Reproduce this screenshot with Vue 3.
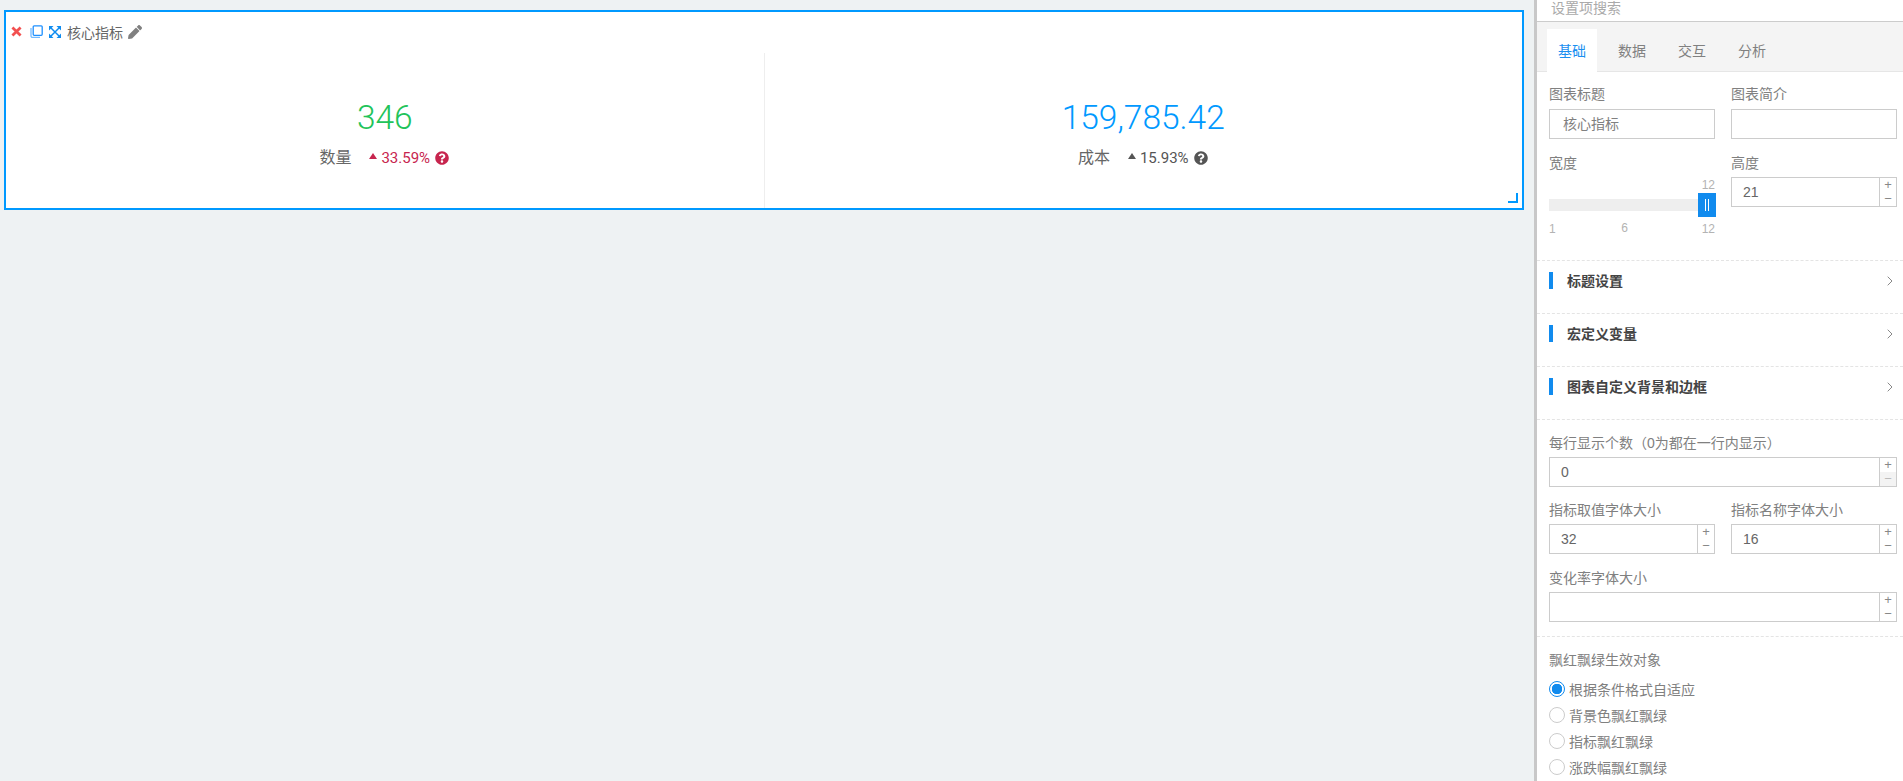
<script setup>
const metrics = [
  { value: '346', name: '数量', rate: '33.59%', valueColor: '#22c35a', rateColor: '#c7254e' },
  { value: '159,785.42', name: '成本', rate: '15.93%', valueColor: '#0099ff', rateColor: '#555555' },
]
const tabs = ['基础', '数据', '交互', '分析']
const sections = ['标题设置', '宏定义变量', '图表自定义背景和边框']
const radios = ['根据条件格式自适应', '背景色飘红飘绿', '指标飘红飘绿', '涨跌幅飘红飘绿']
const helpPath = 'M504 256c0 136.997-111.043 248-248 248S8 392.997 8 256C8 119.083 119.043 8 256 8s248 111.083 248 248zM262.655 90c-54.497 0-89.255 22.957-116.549 63.758-3.536 5.286-2.353 12.415 2.715 16.258l34.699 26.31c5.205 3.947 12.621 3.008 16.665-2.122 17.864-22.658 30.113-35.797 57.303-35.797 20.429 0 45.698 13.148 45.698 32.958 0 14.976-12.363 22.667-32.534 33.976C247.128 238.528 216 254.941 216 296v4c0 6.627 5.373 12 12 12h56c6.627 0 12-5.373 12-12v-1.333c0-28.462 83.186-29.647 83.186-106.667 0-58.002-60.165-102-116.531-102zM256 338c-25.365 0-46 20.635-46 46 0 25.364 20.635 46 46 46s46-20.636 46-46c0-25.365-20.635-46-46-46z'
</script>

<template>
  <div class="page">
    <main class="canvas">
      <section class="card">
        <header class="card-head">
          <svg class="ic-close" viewBox="0 0 10 10"><path d="M1.300 1.300l7.400 7.400M8.700 1.300L1.300 8.700" /></svg>
          <svg class="ic-copy" viewBox="0 0 13 13">
            <path class="back" d="M1 3v8a1.500 1.500 0 0 0 1.500 1.500H10" />
            <rect x="3.200" y="0.800" width="9" height="9.500" rx="1" />
          </svg>
          <svg class="ic-expand" viewBox="0 0 12 12">
            <path class="cross" d="M2 2l8 8M10 2l-8 8" />
            <path class="fill" d="M0 0h4.500L0 4.500zM12 0v4.500L7.500 0zM0 12V7.500L4.500 12zM12 12H7.500L12 7.500z" />
          </svg>
          <span class="card-title">核心指标</span>
          <svg class="ic-pencil" viewBox="0 0 512 512"><path d="M497.900 142.100l-46.100 46.100c-4.700 4.700-12.300 4.700-17 0l-111-111c-4.700-4.700-4.700-12.300 0-17l46.100-46.100c18.700-18.700 49.100-18.700 67.900 0l60.100 60.100c18.800 18.700 18.800 49.100 0 67.900zM284.200 99.800L21.600 362.400.4 483.900c-2.900 16.400 11.400 30.600 27.800 27.800l121.500-21.300 262.600-262.600c4.700-4.700 4.700-12.300 0-17l-111-111c-4.800-4.700-12.400-4.700-17.100 0z" /></svg>
        </header>
        <div class="metrics">
          <div v-for="m in metrics" :key="m.name" class="metric">
            <div class="metric-value" :style="{ color: m.valueColor }">{{ m.value }}</div>
            <div class="metric-foot">
              <span class="metric-name">{{ m.name }}</span>
              <span class="metric-rate" :style="{ color: m.rateColor }">
                <i class="tri"></i>{{ m.rate }}
                <svg class="ic-help" viewBox="0 0 512 512"><path :d="helpPath" fill="currentColor" /></svg>
              </span>
            </div>
          </div>
        </div>
        <i class="resize"></i>
      </section>
    </main>

    <aside class="panel">
      <div class="search">设置项搜索</div>
      <nav class="tabs">
        <span v-for="(t, i) in tabs" :key="t" class="tab" :class="{ active: i === 0 }">{{ t }}</span>
      </nav>

      <div class="block base">
        <div class="row">
          <div class="field">
            <label>图表标题</label>
            <div class="text-input">核心指标</div>
          </div>
          <div class="field">
            <label>图表简介</label>
            <div class="text-input"></div>
          </div>
        </div>
        <div class="row">
          <div class="field">
            <label>宽度</label>
            <div class="slider">
              <div class="slider-now">12</div>
              <div class="slider-track">
                <span class="slider-handle"><i></i><i></i></span>
              </div>
              <div class="slider-scale"><span>1</span><span class="mid">6</span><span>12</span></div>
            </div>
          </div>
          <div class="field">
            <label>高度</label>
            <div class="num-input">
              <span class="num-value">21</span>
              <span class="spin"><b>+</b><b>−</b></span>
            </div>
          </div>
        </div>
      </div>

      <div v-for="s in sections" :key="s" class="fold">
        <i class="fold-bar"></i>
        <span class="fold-title">{{ s }}</span>
        <svg class="chevron" viewBox="0 0 6 10"><path d="M.7.7L5 5 .7 9.300" /></svg>
      </div>

      <div class="block sizes">
        <div class="field">
          <label>每行显示个数（0为都在一行内显示）</label>
          <div class="num-input">
            <span class="num-value">0</span>
            <span class="spin"><b>+</b><b class="off">−</b></span>
          </div>
        </div>
        <div class="row second">
          <div class="field">
            <label>指标取值字体大小</label>
            <div class="num-input">
              <span class="num-value">32</span>
              <span class="spin"><b>+</b><b>−</b></span>
            </div>
          </div>
          <div class="field">
            <label>指标名称字体大小</label>
            <div class="num-input">
              <span class="num-value">16</span>
              <span class="spin"><b>+</b><b>−</b></span>
            </div>
          </div>
        </div>
        <div class="field">
          <label>变化率字体大小</label>
          <div class="num-input">
            <span class="num-value"></span>
            <span class="spin"><b>+</b><b>−</b></span>
          </div>
        </div>
      </div>

      <div class="block target">
        <label>飘红飘绿生效对象</label>
        <div v-for="(r, i) in radios" :key="r" class="radio" :class="{ checked: i === 0 }">
          <i class="radio-dot"></i>{{ r }}
        </div>
      </div>
    </aside>
  </div>
</template>

<style scoped>
.page {
  display: flex;
  height: 781px;
  overflow: hidden;
  background: #eef2f3;
  color: #808080;
  font-family: "Liberation Sans", "Noto Sans CJK SC", sans-serif;
  font-size: 14px;
}
.canvas {
  flex: 1;
  min-width: 0;
  padding: 10px 10px 0 4px;
}
.card {
  position: relative;
  display: flex;
  flex-direction: column;
  height: 200px;
  box-sizing: border-box;
  background: #fff;
  border: 2px solid #0099ff;
}
.card-head {
  display: flex;
  align-items: center;
  height: 41px;
  box-sizing: border-box;
  padding: 0 0 2px 5px;
  color: #666;
}
.ic-close {
  width: 11px;
  height: 11px;
  fill: none;
  stroke: #f25050;
  stroke-width: 2.500;
}
.ic-copy {
  width: 13px;
  height: 13px;
  margin-left: 8px;
  fill: none;
  stroke: #1e90ff;
  stroke-width: 1.300;
}
.ic-copy .back {
  stroke: #74bbff;
}
.ic-expand {
  width: 12px;
  height: 12px;
  margin-left: 6px;
}
.ic-expand .fill {
  fill: #0f8cf0;
}
.ic-expand .cross {
  fill: none;
  stroke: #0f8cf0;
  stroke-width: 1.500;
}
.card-title {
  margin-left: 6px;
  font-size: 14px;
  color: #666;
}
.ic-pencil {
  width: 14px;
  height: 14px;
  margin-left: 5px;
  fill: #808080;
}
.metrics {
  display: flex;
  flex: 1;
}
.metric {
  flex: 1;
  display: flex;
  flex-direction: column;
  align-items: center;
  padding-top: 45px;
}
.metric + .metric {
  border-left: 1px solid #eeeeee;
}
.metric-value {
  font-family: Roboto, "Liberation Sans", sans-serif;
  font-weight: 300;
  font-size: 33.500px;
  line-height: 40px;
}
.metric-foot {
  display: flex;
  align-items: center;
  margin-top: 9px;
  margin-left: -1px;
  line-height: 22px;
}
.metric-name {
  font-size: 16px;
  color: #666;
}
.metric-rate {
  display: flex;
  align-items: center;
  margin-left: 18px;
  font-family: Roboto, "Liberation Sans", sans-serif;
  font-size: 15px;
}
.tri {
  width: 0;
  height: 0;
  margin-right: 4px;
  border-left: 4px solid transparent;
  border-right: 4px solid transparent;
  border-bottom: 6px solid currentColor;
  transform: translateY(-2px);
}
.ic-help {
  width: 14px;
  height: 14px;
  margin-left: 5px;
}
.resize {
  position: absolute;
  right: 4px;
  bottom: 5px;
  width: 8px;
  height: 8px;
  border-right: 2px solid #0099ff;
  border-bottom: 2px solid #0099ff;
}
.panel {
  width: 366px;
  flex: none;
  border-left: 3px solid #c8c8c8;
  background: #fff;
}
.search {
  height: 21px;
  padding-left: 14px;
  border-bottom: 1px solid #cccccc;
  font-size: 14px;
  line-height: 17px;
  color: #aaaaaa;
}
.tabs {
  display: flex;
  gap: 10px;
  height: 50px;
  box-sizing: border-box;
  padding: 7px 0 0 10px;
  background: #f4f4f4;
  border-bottom: 1px solid #e6e6e6;
}
.tab {
  width: 50px;
  height: 43px;
  line-height: 44px;
  text-align: center;
  color: #808080;
}
.tab.active {
  background: #fff;
  color: #1a8ff0;
}
.block {
  padding: 0 6px 0 12px;
}
.base {
  height: 188px;
  box-sizing: border-box;
  padding-top: 12px;
}
.base .row:first-child label {
  margin-bottom: 5px;
}
.row {
  display: grid;
  grid-template-columns: 166px 166px;
  gap: 16px;
}
.row + .row,
.sizes > * + * {
  margin-top: 14px;
}
.sizes > .second {
  margin-top: 13px;
}
label {
  display: block;
  margin-bottom: 4px;
  line-height: 20px;
  color: #808080;
}
.text-input {
  height: 30px;
  box-sizing: border-box;
  padding-left: 13px;
  border: 1px solid #cccccc;
  line-height: 28px;
  color: #808080;
}
.num-input {
  display: flex;
  height: 30px;
  box-sizing: border-box;
  border: 1px solid #cccccc;
}
.num-value {
  flex: 1;
  padding-left: 11px;
  line-height: 28px;
  color: #666;
}
.spin {
  display: flex;
  flex-direction: column;
  width: 16px;
  border-left: 1px solid #cccccc;
}
.spin b {
  flex: 1;
  font-weight: 400;
  font-size: 13px;
  line-height: 14px;
  text-align: center;
  color: #888;
}
.spin b.off {
  background: #f3f3f3;
  color: #bbb;
}
.slider {
  color: #b3b3b3;
  font-size: 12px;
}
.slider-now {
  height: 14px;
  line-height: 16px;
  text-align: right;
}
.slider-track {
  position: relative;
  height: 12px;
  margin-top: 8px;
  background: #eeeeee;
}
.slider-handle {
  position: absolute;
  right: -1px;
  top: -6px;
  display: flex;
  justify-content: center;
  gap: 2px;
  width: 18px;
  height: 24px;
  padding-top: 6px;
  box-sizing: border-box;
  background: #118bee;
}
.slider-handle i {
  width: 1px;
  height: 12px;
  background: #fff;
}
.slider-scale {
  display: flex;
  justify-content: space-between;
  margin-top: 11px;
  line-height: 14px;
}
.slider-scale .mid {
  margin: -1px 8px 0 0;
}
.fold {
  display: flex;
  align-items: center;
  height: 53px;
  box-sizing: border-box;
  padding: 0 10px 13px 12px;
  border-top: 1px dashed #e4e4e4;
}
.fold-bar {
  width: 4px;
  height: 17px;
  background: #118bee;
}
.fold-title {
  flex: 1;
  margin: -2px 0 0 14px;
  font-weight: 700;
  color: #444;
}
.chevron {
  width: 6px;
  height: 10px;
  fill: none;
  stroke: #888;
  stroke-width: 1;
}
.sizes {
  padding-top: 13px;
  padding-bottom: 14px;
  border-top: 1px dashed #e4e4e4;
}
.target {
  padding-top: 13px;
  border-top: 1px dashed #e4e4e4;
}
.target label {
  margin-bottom: 6px;
}
.radio {
  display: flex;
  align-items: center;
  height: 26px;
  color: #808080;
}
.radio-dot {
  width: 16px;
  height: 16px;
  box-sizing: border-box;
  margin-right: 4px;
  border: 1px solid #cccccc;
  border-radius: 50%;
  background: #fff;
}
.checked .radio-dot {
  border-color: #118bee;
  background: radial-gradient(circle, #118bee 0 5px, #fff 5.500px);
}
</style>

<style>
html, body {
  margin: 0;
  overflow: hidden;
}
</style>
